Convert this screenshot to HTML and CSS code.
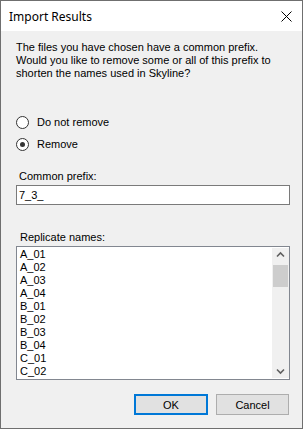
FILE: index.html
```html
<!DOCTYPE html>
<html>
<head>
<meta charset="utf-8">
<link rel="stylesheet" href="styles.css">
</head>
<body>
<div class="window">
  <div class="titlebar">
    <span class="title">Import Results</span>
    <svg class="close" width="11" height="11" viewBox="0 0 11 11"><path d="M0.5 0.5 L10.5 10.5 M10.5 0.5 L0.5 10.5" stroke="#000" stroke-width="1" fill="none"/></svg>
  </div>
  <div class="content">
    <p class="intro">The files you have chosen have a common prefix.<br>Would you like to remove some or all of this prefix to<br>shorten the names used in Skyline?</p>
    <div class="radios">
      <label class="radio"><span class="dot"></span>Do not remove</label>
      <label class="radio checked"><span class="dot"></span>Remove</label>
    </div>
    <div class="field-label prefix-label">Common prefix:</div>
    <div class="textbox">7_3_</div>
    <div class="field-label names-label">Replicate names:</div>
    <div class="listbox">
      <div class="items">
        <div>A_01</div><div>A_02</div><div>A_03</div><div>A_04</div>
        <div>B_01</div><div>B_02</div><div>B_03</div><div>B_04</div>
        <div>C_01</div><div>C_02</div>
      </div>
      <div class="scrollbar">
        <svg class="arrow" width="17" height="14" viewBox="0 0 17 14"><path d="M5 8.5 L8.5 5 L12 8.5" stroke="#606060" stroke-width="1.6" fill="none"/></svg>
        <div class="track"><div class="thumb"></div></div>
        <svg class="arrow" width="17" height="14" viewBox="0 0 17 14"><path d="M5 5.5 L8.5 9 L12 5.5" stroke="#606060" stroke-width="1.6" fill="none"/></svg>
      </div>
    </div>
    <div class="buttons">
      <div class="btn default">OK</div>
      <div class="btn">Cancel</div>
    </div>
  </div>
</div>
</body>
</html>
```
FILE: styles.css
```css
html, body {
  margin: 0;
  padding: 0;
  background: #ffffff;
}
.window {
  width: 303px;
  height: 429px;
  box-sizing: border-box;
  border: 1px solid #6f6f6f;
  display: flex;
  flex-direction: column;
  font-family: "Liberation Sans", Arial, sans-serif;
  font-size: 11px;
  color: #000;
}
.titlebar {
  height: 30px;
  background: #ffffff;
  display: flex;
  align-items: center;
  justify-content: space-between;
  padding: 0 10px 0 8px;
  flex: none;
}
.title {
  font-family: "Noto Sans", "Open Sans", sans-serif;
  font-size: 12px;
  color: #000;
  margin-top: 1px;
}
.close {
  display: block;
}
.content {
  flex: 1;
  background: #f0f0f0;
  padding: 10px 12px 0 15px;
  display: flex;
  flex-direction: column;
}
.intro {
  margin: 0;
  line-height: 13px;
}
.radios {
  display: flex;
  flex-direction: column;
  gap: 6px;
  margin-top: 34px;
}
.radio {
  display: flex;
  align-items: center;
  height: 16px;
  gap: 8px;
}
.dot {
  width: 11px;
  height: 11px;
  border: 1px solid #333333;
  border-radius: 50%;
  background: #ffffff;
  position: relative;
  flex: none;
}
.radio.checked .dot::after {
  content: "";
  position: absolute;
  left: 3px;
  top: 3px;
  width: 5px;
  height: 5px;
  border-radius: 50%;
  background: #333333;
}
.field-label {
  line-height: 13px;
  padding-left: 3px;
}
.prefix-label {
  margin-top: 18px;
}
.names-label {
  margin-top: 26px;
  padding-left: 4px;
}
.textbox {
  margin-top: 2px;
  height: 20px;
  box-sizing: border-box;
  border: 1px solid #7a7a7a;
  background: #fff;
  padding: 2px 2px;
  line-height: 14px;
  width: 274px;
}
.listbox {
  margin-top: 2px;
  width: 274px;
  height: 134px;
  box-sizing: border-box;
  border: 1px solid #828790;
  background: #fff;
  display: flex;
  overflow: hidden;
}
.items {
  flex: 1;
  padding: 1px 0 0 3px;
  line-height: 13px;
  overflow: hidden;
}
.scrollbar {
  width: 17px;
  background: #f0f0f0;
  display: flex;
  flex-direction: column;
  flex: none;
  margin: 1px 0 1px 0;
}
.arrow {
  display: block;
  flex: none;
}
.track {
  flex: 1;
  padding: 3px 1px 0 1px;
}
.thumb {
  height: 22px;
  background: #cdcdcd;
}
.buttons {
  margin-top: 14px;
  display: flex;
  justify-content: flex-end;
  gap: 8px;
  padding-right: 1px;
}
.btn {
  width: 73px;
  height: 21px;
  box-sizing: border-box;
  border: 1px solid #adadad;
  background: #e1e1e1;
  display: flex;
  align-items: center;
  justify-content: center;
  font-size: 11px;
}
.btn.default {
  width: 74px;
  border: 2px solid #0078d7;
}
```
